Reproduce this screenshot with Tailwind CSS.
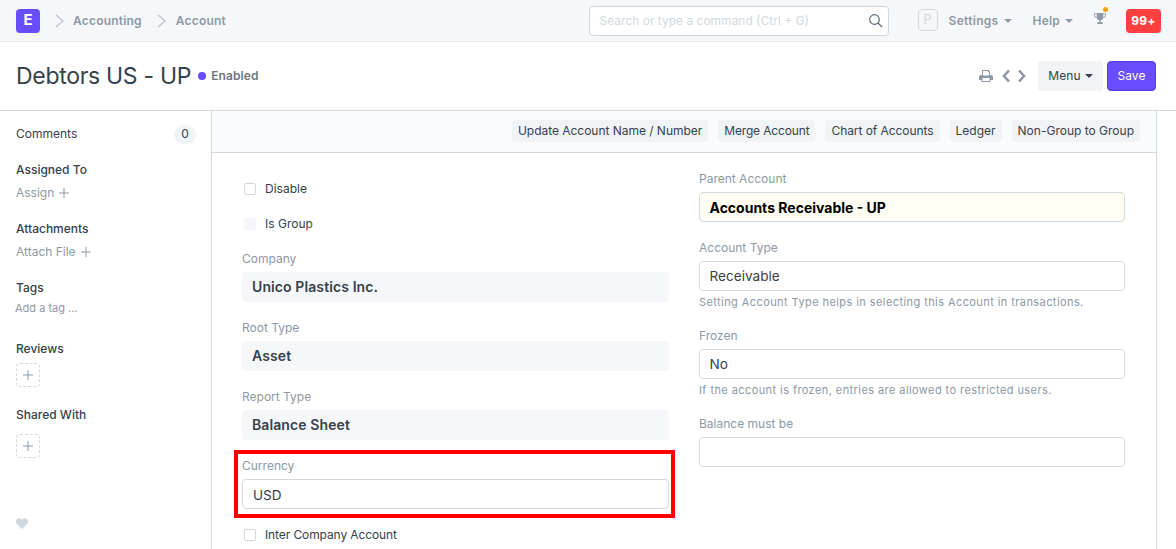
<!DOCTYPE html>
<html lang="en">
<head>
    <meta charset="UTF-8">
    <title>Debtors US - UP</title>
    <script src="https://cdn.jsdelivr.net/npm/@tailwindcss/browser@4"></script>
</head>
<body class="bg-white font-['Inter',sans-serif] text-[#36414c] h-[549px] w-[1176px] overflow-hidden flex flex-col">
    <!-- navbar -->
    <nav class="h-[42px] shrink-0 bg-[#f5f7fa] border-b border-[#e8ebf0] flex items-center pl-4 pr-[15px] relative">
        <div class="w-6 h-6 rounded bg-[#6a4cff] text-white font-bold text-[15px] flex items-center justify-center">E</div>
        <svg class="ml-[15px] w-[9px] h-[14px]" viewBox="0 0 9 14" fill="none" stroke="#b8c2cc" stroke-width="1.2"><path d="M1 1l7 6-7 6"/></svg>
        <a class="ml-[9px] text-[12px] font-semibold tracking-[0.2px] text-[#8d99a6]">Accounting</a>
        <svg class="ml-[15px] w-[9px] h-[14px]" viewBox="0 0 9 14" fill="none" stroke="#b8c2cc" stroke-width="1.2"><path d="M1 1l7 6-7 6"/></svg>
        <a class="ml-[10px] text-[12px] font-semibold tracking-[0.2px] text-[#8d99a6]">Account</a>
        <div class="ml-auto flex items-center">
            <div class="w-[300px] h-[30px] bg-white border border-[#d1d8dd] rounded flex items-center justify-between pl-[10px] pr-[5px] text-[12px] text-[#d1d8dd]">
                <span>Search or type a command (Ctrl + G)</span>
                <svg class="w-[15px] h-[15px]" viewBox="0 0 15 15" fill="none" stroke="#5e6b78" stroke-width="1.2"><circle cx="6.5" cy="6.5" r="4.8"/><path d="M10 10l4 4"/></svg>
            </div>
            <div class="ml-[29px] -mt-px w-5 h-[22px] border border-[#d1d8dd] rounded text-[#d1d8dd] text-[13px] flex items-center justify-center">P</div>
            <span class="ml-[11px] text-[12px] font-semibold tracking-[0.3px] text-[#8d99a6]">Settings</span>
            <span class="ml-[5px] w-0 h-0 border-x-4 border-x-transparent border-t-4 border-t-[#8d99a6]"></span>
            <span class="ml-[21px] text-[12px] font-semibold tracking-[0.2px] text-[#8d99a6]">Help</span>
            <span class="ml-[5px] w-0 h-0 border-x-4 border-x-transparent border-t-4 border-t-[#8d99a6]"></span>
            <div class="relative ml-5 w-[14px] h-[13px] -mt-[5px]">
                <svg class="w-[14px] h-[13px]" viewBox="0 0 14 14" fill="#8d99a6"><path d="M3.5 1h7v4.5a3.5 3.5 0 0 1-7 0zM6.200 8.500h1.600v2.500h-1.600zM4 11h6v2H4z"/><path d="M3.500 2H1v1.500A2.500 2.500 0 0 0 3.500 6M10.500 2H13v1.500A2.500 2.500 0 0 1 10.500 6" fill="none" stroke="#8d99a6"/></svg>
                <span class="absolute -top-[5px] right-[-1px] w-[5px] h-[5px] rounded-full bg-[#ffa00a]"></span>
            </div>
            <div class="ml-[19px] w-[35px] h-6 rounded bg-[#ff4040] text-white text-[12px] font-bold tracking-[0.3px] flex items-center justify-center">99+</div>
        </div>
    </nav>
    <!-- page head -->
    <header class="h-[69px] shrink-0 border-b border-[#d1d8dd] flex items-center pl-4 pr-5">
        <h1 class="text-[23px] leading-[30px] font-normal tracking-[-0.3px] text-[#36414c]">Debtors US - UP</h1>
        <span class="ml-[7px] w-2 h-2 rounded-full bg-[#6a4cff]"></span>
        <span class="ml-[5px] text-[12px] font-semibold tracking-[0.1px] text-[#6c7680]">Enabled</span>
        <div class="ml-auto flex items-center">
            <svg class="w-[14px] h-[12px]" viewBox="0 0 14 12" fill="#8d99a6"><path fill-rule="evenodd" d="M3 0h6.500L11 1.500V5h1a2 2 0 0 1 2 2v3h-2.500v2h-9v-2H0V7a2 2 0 0 1 2-2h1zM4 1v4.500h6V2H9V1zM3.500 8v3h7V8z"/></svg>
            <svg class="ml-[8px] w-[10px] h-[14px]" viewBox="0 0 10 14" fill="none" stroke="#8d99a6" stroke-width="2.600"><path d="M8 1.500L3 7l5 5.500"/></svg>
            <svg class="ml-[6px] w-[10px] h-[14px]" viewBox="0 0 10 14" fill="none" stroke="#8d99a6" stroke-width="2.600"><path d="M2 1.500L7 7l-5 5.500"/></svg>
            <button class="ml-[11px] w-[65px] h-[30px] rounded bg-[#f0f4f7] text-[12px] tracking-[0.1px] text-[#36414c] flex items-center justify-center gap-1">Menu<span class="w-0 h-0 border-x-4 border-x-transparent border-t-4 border-t-[#36414c]"></span></button>
            <button class="ml-1 w-[49px] h-[30px] rounded bg-[#6a4cff] border border-[#5a36f0] text-[12px] tracking-[0.1px] text-white">Save</button>
        </div>
    </header>
    <div class="flex flex-1 min-h-0">
        <!-- sidebar -->
        <aside class="w-[212px] shrink-0 border-r border-[#d1d8dd] pl-4 pr-[15px] text-[12px] flex flex-col">
            <div class="mt-[13px] h-5 flex items-center justify-between">
                <span class="font-normal">Comments</span>
                <span class="w-[22px] h-[19px] rounded-full bg-[#f0f4f7] flex items-center justify-center">0</span>
            </div>
            <div class="mt-[18px] leading-4 font-medium">Assigned To</div>
            <div class="mt-[7px] leading-4 text-[#8d99a6] flex items-center gap-[5px]">Assign <svg class="w-[10px] h-[10px]" viewBox="0 0 10 10" stroke="#8d99a6"><path d="M5 0v10M0 5h10"/></svg></div>
            <div class="mt-[20px] leading-4 font-medium">Attachments</div>
            <div class="mt-[7px] leading-4 text-[#8d99a6] flex items-center gap-[5px]">Attach File <svg class="w-[10px] h-[10px]" viewBox="0 0 10 10" stroke="#8d99a6"><path d="M5 0v10M0 5h10"/></svg></div>
            <div class="mt-[20px] leading-4 font-medium">Tags</div>
            <div class="mt-[4px] -ml-px leading-4 text-[11px] text-[#8d99a6]">Add a tag ...</div>
            <div class="mt-[25px] leading-4 font-medium">Reviews</div>
            <div class="mt-[6px] w-6 h-6 border border-dashed border-[#d1d8dd] rounded flex items-center justify-center"><svg class="w-[10px] h-[10px]" viewBox="0 0 10 10" stroke="#8d99a6"><path d="M5 0v10M0 5h10"/></svg></div>
            <div class="mt-[20px] leading-4 font-medium">Shared With</div>
            <div class="mt-[11px] w-6 h-6 border border-dashed border-[#d1d8dd] rounded flex items-center justify-center"><svg class="w-[10px] h-[10px]" viewBox="0 0 10 10" stroke="#8d99a6"><path d="M5 0v10M0 5h10"/></svg></div>
            <svg class="mt-[60px] w-3 h-[11px]" viewBox="0 0 12 11" fill="#d1d8dd"><path d="M6 11L1 6A3 3 0 0 1 1 1.200 3.200 3.200 0 0 1 6 1.800 3.200 3.200 0 0 1 11 1.200 3 3 0 0 1 11 6z"/></svg>
        </aside>
        <!-- form -->
        <main class="w-[945px] shrink-0 border-r border-[#d1d8dd] flex flex-col">
            <div class="h-[42px] shrink-0 bg-[#fafbfc] border-b border-[#d1d8dd] flex items-center justify-end gap-[10px] pr-[16px] pb-[2px] text-[12px] text-[#36414c]">
                <button class="h-[22px] px-[6px] rounded-[3px] bg-[#f0f4f7] tracking-[-0.03px]">Update Account Name / Number</button>
                <button class="h-[22px] px-[6px] rounded-[3px] bg-[#f0f4f7] tracking-[-0.15px]">Merge Account</button>
                <button class="h-[22px] px-[6px] rounded-[3px] bg-[#f0f4f7] tracking-[-0.06px]">Chart of Accounts</button>
                <button class="h-[22px] px-[6px] rounded-[3px] bg-[#f0f4f7]">Ledger</button>
                <button class="h-[22px] px-[6px] rounded-[3px] bg-[#f0f4f7]">Non-Group to Group</button>
            </div>
            <div class="grid grid-cols-[427px_426px] gap-x-[30px] pl-[30px] text-[12px]">
                <div>
                    <label class="mt-[28px] ml-[2px] h-4 flex items-center gap-[9px]"><span class="w-[12px] h-[12px] border border-[#d1d8dd] rounded-[2px]"></span>Disable</label>
                    <label class="mt-[19px] ml-[2px] h-4 flex items-center gap-[9px]"><span class="w-[12px] h-[12px] bg-[#f5f7fa] rounded-[2px]"></span>Is Group</label>
                    <div class="mt-[19px] h-4 leading-4 text-[#8d99a6]">Company</div>
                    <div class="mt-[5px] h-[30px] rounded bg-[#f5f7fa] px-[10px] pb-[2px] flex items-center text-[14px] font-semibold tracking-[0.1px]">Unico Plastics Inc.</div>
                    <div class="mt-[18px] h-4 leading-4 text-[#8d99a6]">Root Type</div>
                    <div class="mt-[5px] h-[30px] rounded bg-[#f5f7fa] px-[10px] pb-[2px] flex items-center text-[14px] font-semibold tracking-[0.1px]">Asset</div>
                    <div class="mt-[18px] h-4 leading-4 text-[#8d99a6]">Report Type</div>
                    <div class="mt-[5px] h-[30px] rounded bg-[#f5f7fa] px-[10px] pb-[2px] flex items-center text-[14px] font-semibold tracking-[0.1px]">Balance Sheet</div>
                    <!-- highlighted field -->
                    <div class="relative">
                        <div class="absolute -left-[8px] -right-[6px] top-[10px] h-[68px] border-4 border-[#f00] pointer-events-none"></div>
                        <div class="pt-[18px] h-[34px] leading-4 text-[#8d99a6]">Currency</div>
                        <div class="mt-[5px] h-[30px] rounded border border-[#d1d8dd] px-[10px] pt-[2px] flex items-center text-[13.6px]">USD</div>
                    </div>
                    <label class="mt-[18px] ml-[2px] h-4 flex items-center gap-[9px] tracking-[-0.1px]"><span class="w-[12px] h-[12px] border border-[#d1d8dd] rounded-[2px]"></span>Inter Company Account</label>
                </div>
                <div>
                    <div class="mt-[18px] h-4 leading-4 text-[#8d99a6]">Parent Account</div>
                    <div class="mt-[5px] h-[30px] rounded border border-[#d1d8dd] bg-[#fffdf4] px-[9.5px] flex items-center text-[14px] font-bold text-black">Accounts Receivable - UP</div>
                    <div class="mt-[18px] h-4 leading-4 text-[#8d99a6]">Account Type</div>
                    <div class="mt-[5px] h-[30px] rounded border border-[#d1d8dd] px-[9.5px] flex items-center text-[13.6px]">Receivable</div>
                    <p class="mt-[3px] h-4 leading-4 text-[11px] tracking-[0.42px] text-[#8d99a6]">Setting Account Type helps in selecting this Account in transactions.</p>
                    <div class="mt-[18px] h-4 leading-4 text-[#8d99a6]">Frozen</div>
                    <div class="mt-[5px] h-[30px] rounded border border-[#d1d8dd] px-[9.5px] flex items-center text-[13.6px]">No</div>
                    <p class="mt-[3px] h-4 leading-4 text-[11px] tracking-[0.42px] text-[#8d99a6]">If the account is frozen, entries are allowed to restricted users.</p>
                    <div class="mt-[18px] h-4 leading-4 text-[#8d99a6]">Balance must be</div>
                    <div class="mt-[5px] h-[30px] rounded border border-[#d1d8dd]"></div>
                </div>
            </div>
        </main>
    </div>
</body>
</html>
